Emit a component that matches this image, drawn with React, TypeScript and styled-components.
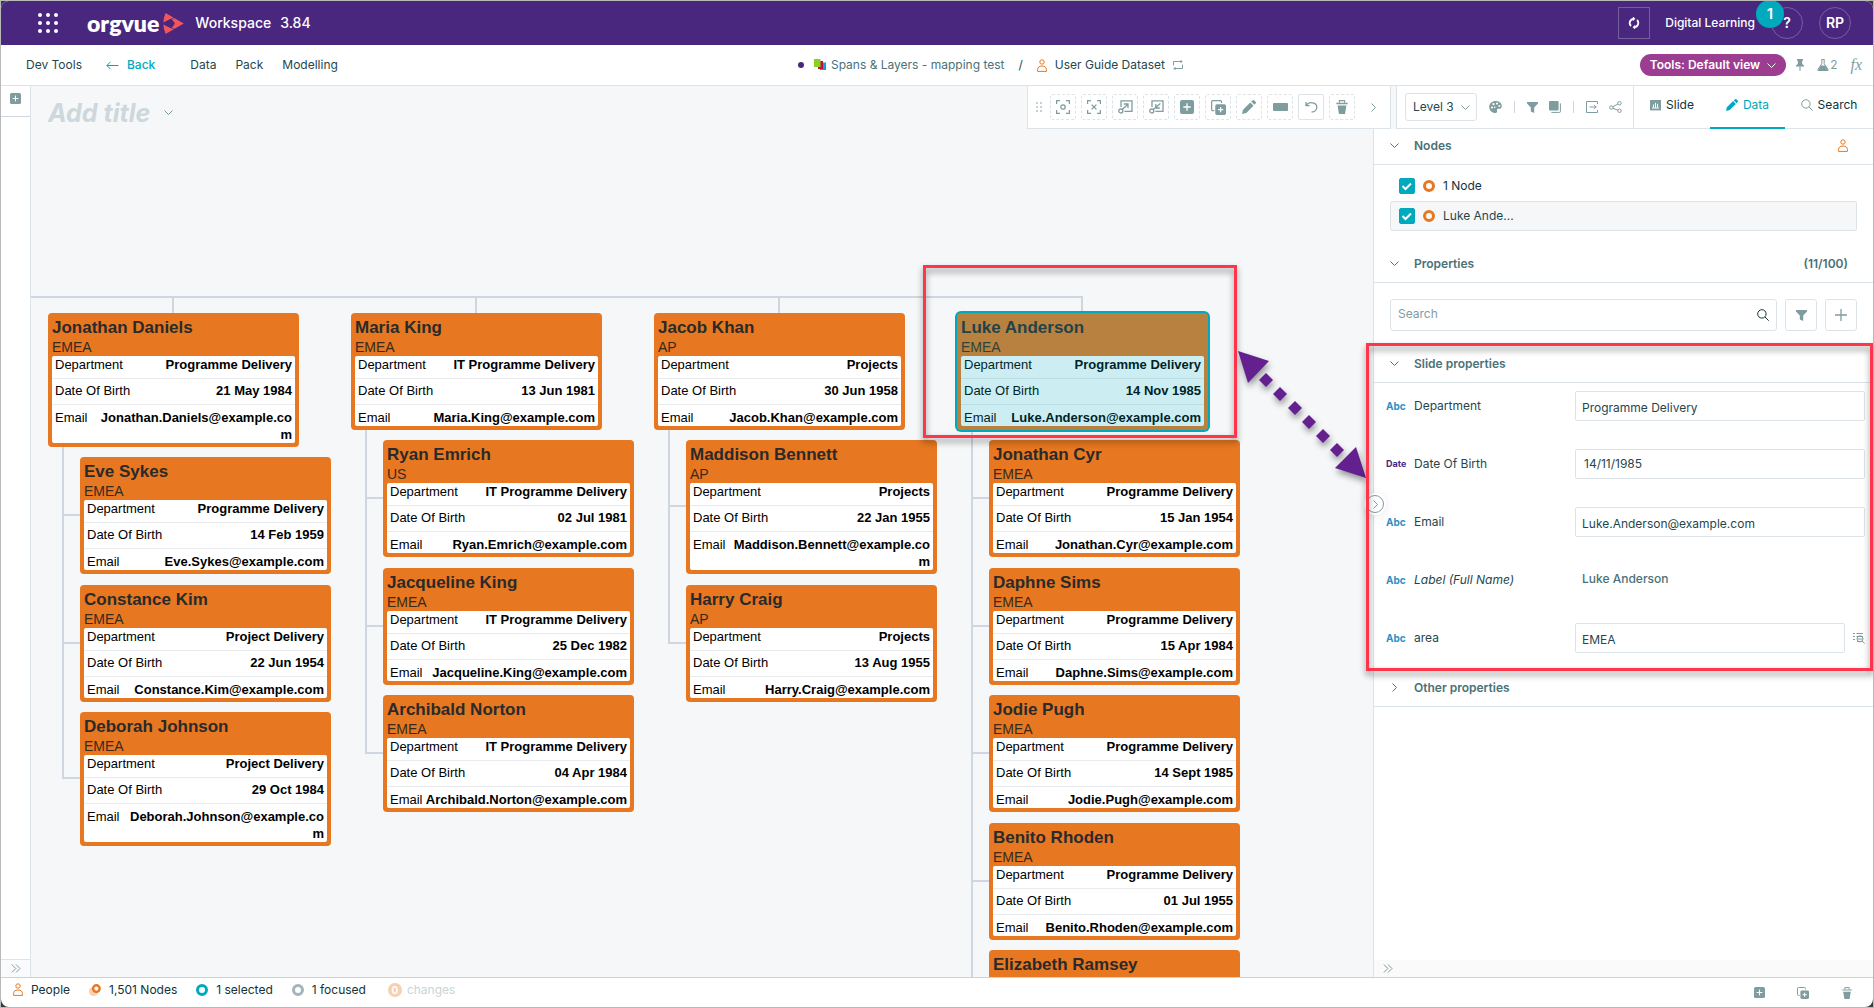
import React, { useState } from "react";
import styled, { createGlobalStyle, css } from "styled-components";

const color = {
  purple: "#49277e",
  teal: "#00a9bd",
  orange: "#e77721",
  text: "#1f474d",
  dark: "#0f3338",
  muted: "#4a7277",
  icon: "#7f9c9f",
  line: "#dde4e9",
  canvas: "#f5f7f9",
  link: "#d0d6df",
  alert: "#ff354c",
};

const GlobalStyle = createGlobalStyle`
  *, *::before, *::after { box-sizing: border-box; }
  body { margin: 0; background: #3a3a3a; }
  button, input, select { font: inherit; color: inherit; margin: 0; }
  button { padding: 0; border: 0; background: none; cursor: pointer; }
  svg { display: block; flex: none; }
`;

const Frame = styled.div`
  height: 100vh;
  border: 1px solid #b9b9b9;
  font-family: Inter, "Liberation Sans", sans-serif;
  font-size: 12px;
  line-height: 16px;
  color: ${color.text};
`;

const Window = styled.div`
  display: flex;
  flex-direction: column;
  height: 100%;
  overflow: hidden;
  border-radius: 8px;
  background: #fff;
`;

/* ---------- top bar ---------- */

const TopBar = styled.header`
  display: flex;
  align-items: center;
  flex: none;
  height: 44px;
  padding: 0 22px 0 36px;
  background: ${color.purple};
  color: #fff;
  font-weight: 500;
`;

const Brand = styled.div`
  display: flex;
  align-items: center;
  gap: 4px;
  margin: 0 11px 0 28px;
  font: 800 23px/28px Lato, "Open Sans", sans-serif;
`;

const Product = styled.span`
  display: flex;
  gap: 9px;
  flex: 1;
  font-size: 14px;
`;

const SquareButton = styled.button`
  display: grid;
  place-items: center;
  width: 32px;
  height: 32px;
  margin-right: 15px;
  border: 1px solid rgba(255, 255, 255, 0.25);
`;

const RoundButton = styled.button`
  position: relative;
  width: 32px;
  height: 32px;
  margin-left: 16px;
  border: 1px solid rgba(255, 255, 255, 0.25);
  border-radius: 50%;
  font-size: 14px;
  font-weight: 600;
`;

const Badge = styled.span`
  position: absolute;
  left: -16px;
  top: -8px;
  width: 28px;
  height: 28px;
  border-radius: 50%;
  background: ${color.teal};
  font-size: 15px;
  line-height: 28px;
  text-align: center;
`;

/* ---------- navigation ---------- */

const NavBar = styled.nav`
  display: flex;
  align-items: center;
  flex: none;
  height: 41px;
  padding-left: 25px;
  border-bottom: 1px solid ${color.line};
`;

const NavLinks = styled.div`
  display: flex;
  align-items: center;
  gap: 19px;
  flex: 1;
`;

const NavLink = styled.a<{ $back?: boolean }>`
  display: flex;
  align-items: center;
  gap: 8px;
  color: inherit;
  text-decoration: none;
  ${(p) =>
    p.$back &&
    css`
      margin: 0 16px 0 5px;
      color: ${color.teal};
      font-weight: 500;
    `}
`;

const Crumbs = styled.div`
  display: flex;
  align-items: center;
  gap: 14px;
`;

const Crumb = styled.a<{ $soft?: boolean; $gap: number }>`
  display: flex;
  align-items: center;
  gap: ${(p) => p.$gap}px;
  color: ${(p) => (p.$soft ? color.muted : color.text)};
  text-decoration: none;
`;

const Dot = styled.i`
  width: 6px;
  height: 6px;
  margin-right: 5px;
  border-radius: 50%;
  background: ${color.purple};
`;

const NavTools = styled.div`
  display: flex;
  align-items: center;
  justify-content: flex-end;
  gap: 13px;
  flex: 0 0 690px;
  padding-right: 11px;
  color: ${color.icon};
`;

const ViewPill = styled.button`
  display: flex;
  align-items: center;
  gap: 7px;
  height: 22px;
  margin-right: -3px;
  padding: 0 10px;
  border-radius: 11px;
  background: #9c3d92;
  color: #fff;
  font-weight: 600;
`;

const ToolButton = styled.button`
  display: flex;
  align-items: center;
  gap: 1px;
`;

const Fx = styled.span`
  font: italic 16px/16px "Liberation Serif", serif;
`;

/* ---------- body ---------- */

const Body = styled.div`
  display: flex;
  flex: 1;
  min-height: 0;
`;

const Rail = styled.aside`
  display: flex;
  flex-direction: column;
  justify-content: space-between;
  flex: none;
  width: 30px;
  border-right: 1px solid ${color.line};
  color: ${color.icon};
`;

const RailTop = styled.button`
  display: grid;
  place-items: center;
  height: 31px;
  padding-bottom: 5px;
  border-bottom: 1px solid ${color.link};
`;

const RailBottom = styled.button`
  display: grid;
  place-items: center;
  height: 18px;
  border-top: 1px solid ${color.line};
  background: #fafbfc;
`;

const Work = styled.main`
  display: flex;
  flex-direction: column;
  flex: 1;
  min-width: 0;
  background: ${color.canvas};
`;

const Strip = styled.div`
  display: flex;
  flex: none;
  height: 43px;
`;

const TitleBox = styled.div`
  display: flex;
  align-items: center;
  gap: 4px;
  flex: 1;
  padding: 10px 0 0 17px;
  color: ${color.icon};
`;

const TitleInput = styled.input`
  width: 112px;
  height: 32px;
  padding: 0;
  border: 0;
  outline: 0;
  background: none;
  font-size: 25px;
  font-style: italic;
  font-weight: 700;
  &::placeholder {
    color: #cdd7dc;
    opacity: 1;
  }
`;

const FloatBar = styled.div`
  display: flex;
  align-items: center;
  gap: 5px;
  width: 364px;
  margin-right: 5px;
  padding-left: 8px;
  border: solid ${color.line};
  border-width: 0 1px 1px 1px;
  background: #fff;
  color: ${color.icon};
`;

const FloatButton = styled.button<{ $solid?: boolean }>`
  display: grid;
  place-items: center;
  width: 26px;
  height: 26px;
  border: 1px ${(p) => (p.$solid ? "solid" : "dashed")} ${color.line};
  border-radius: 2px;
`;

const Grip = styled.span`
  margin-right: 2px;
  opacity: 0.6;
`;

const MoreButton = styled.button`
  display: grid;
  place-items: center;
  width: 26px;
  height: 26px;
`;

const LevelBar = styled.div`
  display: flex;
  align-items: center;
  gap: 12px;
  width: 238px;
  padding-left: 8px;
  border: solid ${color.line};
  border-width: 0 1px 1px 1px;
  background: #fff;
  color: ${color.icon};
`;

const LevelField = styled.label`
  position: relative;
  display: flex;
  align-items: center;
  width: 72px;
  height: 28px;
  svg {
    position: absolute;
    right: 7px;
    pointer-events: none;
  }
`;

const LevelSelect = styled.select`
  width: 100%;
  height: 100%;
  padding: 0 7px;
  border: 1px solid ${color.line};
  border-radius: 3px;
  appearance: none;
  background: #fff;
  color: ${color.text};
`;

const ToolGroup = styled.div<{ $ruled?: boolean }>`
  display: flex;
  gap: 11px;
  ${(p) =>
    p.$ruled &&
    css`
      padding-left: 12px;
      border-left: 1px solid ${color.link};
    `}
`;

const Tabs = styled.div`
  display: flex;
  background: #fff;
`;

const Tab = styled.button<{ $active?: boolean; $width: number }>`
  display: flex;
  align-items: center;
  justify-content: center;
  gap: 5px;
  width: ${(p) => p.$width}px;
  padding-bottom: 4px;
  border-bottom: ${(p) => (p.$active ? `2px solid ${color.teal}` : `1px solid ${color.line}`)};
  color: ${(p) => (p.$active ? color.teal : color.dark)};
  svg {
    color: ${(p) => (p.$active ? color.teal : color.icon)};
  }
`;

const Stage = styled.div`
  display: flex;
  flex: 1;
  min-height: 0;
`;

/* ---------- chart ---------- */

const Canvas = styled.section`
  position: relative;
  flex: 1;
  overflow: hidden;
`;

const Lines = styled.svg`
  position: absolute;
  inset: 0;
  width: 100%;
  height: 100%;
  fill: none;
  stroke: ${color.link};
  stroke-width: 2;
`;

const Card = styled.article<{ $x: number; $y: number; $selected?: boolean }>`
  position: absolute;
  left: ${(p) => p.$x}px;
  top: ${(p) => p.$y}px;
  width: 251px;
  min-height: 117px;
  padding: 5px 4px 4px;
  border-radius: 4px;
  background: ${color.orange};
  font-family: "Liberation Sans", Arial, sans-serif;
  font-size: 13px;
  line-height: 17px;
  color: #000;
  ${(p) =>
    p.$selected &&
    css`
      box-shadow: 0 0 0 2px ${color.teal};
      &::after {
        content: "";
        position: absolute;
        inset: 0;
        border-radius: 4px;
        background: rgba(0, 169, 189, 0.2);
      }
    `}
`;

const CardName = styled.h3`
  margin: 0;
  font-size: 17px;
  line-height: 20px;
  color: #2a2a2a;
`;

const CardArea = styled.p`
  margin: 0;
  font-size: 14px;
  line-height: 18px;
  color: #3a2a1c;
`;

const Facts = styled.dl`
  margin: 0;
  border-radius: 2px;
  background: #fff;
`;

const Fact = styled.div`
  display: flex;
  justify-content: space-between;
  padding: 3px 3px 5px;
  border-bottom: 1px solid #e9ebee;
  &:first-child {
    padding-top: 0;
  }
  &:last-child {
    padding: 4px 3px 0;
    border-bottom: 0;
  }
  dt {
    flex: none;
  }
  dd {
    max-width: 202px;
    margin: 0;
    font-weight: 700;
    text-align: right;
    word-break: break-all;
  }
`;

const Highlight = styled.div`
  position: absolute;
  border: 3px solid ${color.alert};
  filter: drop-shadow(0 4px 3px rgba(0, 0, 0, 0.45));
  pointer-events: none;
`;

const NodeHighlight = styled(Highlight)`
  left: 892px;
  top: 136px;
  width: 314px;
  height: 173px;
`;

const SectionHighlight = styled(Highlight)`
  inset: -4px 0 0 -8px;
`;

const Arrow = styled.svg`
  position: absolute;
  left: 1200px;
  top: 215px;
  filter: drop-shadow(1px 4px 3px rgba(0, 0, 0, 0.4));
`;

/* ---------- properties panel ---------- */

const Panel = styled.aside`
  position: relative;
  display: flex;
  flex-direction: column;
  flex: none;
  width: 500px;
  border-left: 1px solid ${color.line};
  background: #fff;
`;

const PanelBody = styled.div`
  flex: 1;
`;

const PanelFoot = styled.div`
  display: flex;
  align-items: center;
  height: 17px;
  padding-left: 9px;
  background: #fafafa;
  color: ${color.icon};
`;

const Collapse = styled.button`
  position: absolute;
  left: -8px;
  top: 366px;
  display: grid;
  place-items: center;
  width: 18px;
  height: 18px;
  border: 1px solid ${color.icon};
  border-radius: 50%;
  background: #fff;
  box-shadow: 0 0 0 2px #fff, 0 2px 12px rgba(0, 0, 0, 0.15);
  color: ${color.icon};
`;

const Section = styled.section`
  position: relative;
`;

const SectionHead = styled.h2`
  display: flex;
  align-items: center;
  gap: 15px;
  height: 36px;
  margin: 0;
  padding: 0 25px 2px 16px;
  border-bottom: 1px solid ${color.line};
  font-size: 12px;
  font-weight: 600;
  color: ${color.muted};
`;

const HeadText = styled.span`
  flex: 1;
`;

const NodeList = styled.div`
  padding: 6px 16px 16px;
`;

const NodeRow = styled.label<{ $current?: boolean }>`
  display: flex;
  align-items: center;
  gap: 8px;
  height: 30px;
  padding: 0 8px;
  border: 1px solid ${(p) => (p.$current ? color.line : "transparent")};
  border-radius: 2px;
  background: ${(p) => (p.$current ? color.canvas : "#fff")};
  color: ${(p) => (p.$current ? color.text : color.dark)};
`;

const Check = styled.input`
  appearance: none;
  width: 16px;
  height: 16px;
  border: 1px solid ${color.teal};
  border-radius: 2px;
  &:checked {
    background: ${color.teal};
  }
`;

const CheckWrap = styled.span`
  position: relative;
  display: flex;
  svg {
    position: absolute;
    inset: 2px;
    pointer-events: none;
  }
`;

const Ring = styled.i<{ $color: string }>`
  flex: none;
  width: 12px;
  height: 12px;
  border: 3px solid ${(p) => p.$color};
  border-radius: 50%;
`;

const SearchRow = styled.div`
  display: flex;
  gap: 8px;
  padding: 16px;
`;

const SearchBox = styled.label`
  display: flex;
  align-items: center;
  flex: 1;
  height: 32px;
  padding: 0 7px;
  border: 1px solid ${color.line};
  border-radius: 3px;
  color: ${color.dark};
`;

const SearchInput = styled.input`
  flex: 1;
  padding: 0 0 2px;
  border: 0;
  outline: 0;
  background: none;
  &::placeholder {
    color: ${color.icon};
    opacity: 1;
  }
`;

const BoxButton = styled.button`
  display: grid;
  place-items: center;
  width: 32px;
  height: 32px;
  border: 1px solid ${color.line};
  border-radius: 3px;
  color: ${color.icon};
`;

const Fields = styled.div`
  display: grid;
  gap: 28px;
  padding: 8px 8px 18px 12px;
`;

const FieldRow = styled.div<{ $lookup?: boolean }>`
  display: grid;
  grid-template-columns: 20px 153px 1fr ${(p) => (p.$lookup ? "12px" : "")};
  align-items: center;
  column-gap: 8px;
  height: 30px;
`;

const Kind = styled.span<{ $date?: boolean }>`
  font-size: ${(p) => (p.$date ? 9 : 10)}px;
  font-weight: 700;
  color: ${(p) => (p.$date ? color.purple : "#2f8fc4")};
`;

const FieldLabel = styled.label<{ $italic?: boolean }>`
  padding-bottom: 1px;
  font-style: ${(p) => (p.$italic ? "italic" : "normal")};
`;

const FieldInput = styled.input<{ $date?: boolean }>`
  width: 100%;
  min-width: 0;
  height: 30px;
  padding: ${(p) => (p.$date ? "0 8px 2px" : "3px 6px 0")};
  border: 1px solid ${color.line};
  border-radius: 2px;
  outline: 0;
`;

const FieldOutput = styled.output`
  padding: 0 7px 2px;
  font-weight: 500;
  color: ${color.muted};
`;

const FieldButton = styled.button`
  color: ${color.icon};
`;

/* ---------- status bar ---------- */

const StatusBar = styled.footer`
  display: flex;
  align-items: center;
  gap: 19px;
  flex: none;
  height: 30px;
  padding: 0 20px 6px 12px;
  border-top: 1px solid #c9d4d9;
  color: ${color.dark};
`;

const Status = styled.span<{ $faded?: boolean }>`
  display: flex;
  align-items: center;
  gap: ${(p) => (p.$faded ? 5 : 8)}px;
  margin-left: ${(p) => (p.$faded ? 3 : 0)}px;
  color: ${(p) => (p.$faded ? "#c9d4d6" : "inherit")};
`;

const Count = styled.b`
  width: 14px;
  height: 14px;
  border-radius: 50%;
  background: #f8cfb0;
  color: #fff;
  font-size: 10px;
  line-height: 14px;
  text-align: center;
`;

const StatusTools = styled.div`
  display: flex;
  gap: 32px;
  margin-left: auto;
  padding-top: 6px;
  color: ${color.icon};
`;

/* ---------- icons ---------- */

type IconProps = { size?: number };

const Chevron = ({ dir = "down", size = 9 }: { dir?: "down" | "right"; size?: number }) => (
  <svg width={size} height={size} viewBox="0 0 9 9" fill="none" stroke="currentColor">
    <path d={dir === "down" ? "M.5 2.5l4 4 4-4" : "M2.5.5l4 4-4 4"} />
  </svg>
);

const DoubleChevron = () => (
  <svg width="10" height="9" viewBox="0 0 10 9" fill="none" stroke="currentColor">
    <path d="M.8.5l4 4-4 4M5 .5l4 4-4 4" />
  </svg>
);

const Person = () => (
  <svg width="10" height="13" viewBox="0 0 10 13" fill="none" stroke={color.orange}>
    <circle cx="5" cy="3" r="2.2" />
    <path d="M.6 12.4v-1.600Q.6 7 5 7t4.400 3.800v1.600z" />
  </svg>
);

const PlusSquare = ({ size = 11 }: IconProps) => (
  <svg width={size} height={size} viewBox="0 0 11 11">
    <rect width="11" height="11" rx="1.6" fill="currentColor" />
    <path d="M5.5 2.6v5.8M2.6 5.5h5.8" stroke="#fff" />
  </svg>
);

const CopyPlus = ({ size = 12 }: IconProps) => (
  <svg width={size} height={size} viewBox="0 0 12 12">
    <path d="M2.6 8.4H1.4a.9.9 0 01-.9-.9V1.4a.9.9 0 01.9-.9h6.1a.9.9 0 01.9.9v1" fill="none" stroke="currentColor" />
    <rect x="3.4" y="3.4" width="8.6" height="8.6" rx="1.4" fill="currentColor" />
    <path d="M7.7 5.6v4.2M5.6 7.7h4.2" stroke="#fff" />
  </svg>
);

const Trash = ({ size = 12 }: IconProps) => (
  <svg width={size} height={size} viewBox="0 0 12 12">
    <path d="M3.8 2.4V.6h4.4v1.8" fill="none" stroke="currentColor" />
    <path d="M1.2 3h9.6" stroke="currentColor" strokeWidth="1.2" />
    <path d="M2.2 4.7h7.6L8.6 12H3.4z" fill="currentColor" />
  </svg>
);

const Pencil = ({ size = 13 }: IconProps) => (
  <svg width={size} height={size} viewBox="0 0 13 13" fill="currentColor">
    <path d="M0 13l.9-4L7.7 2.300l3 3L4 12zM8.500 1.500L9.700.4a1.200 1.200 0 011.700 0l1.200 1.200a1.200 1.200 0 010 1.700l-1.100 1.200z" />
  </svg>
);

const Funnel = ({ size = 11 }: IconProps) => (
  <svg width={size} height={size} viewBox="0 0 11 11" fill="currentColor">
    <path d="M0 0h11v1.4L7.2 5.600V11L3.800 9.400V5.600L0 1.400z" />
  </svg>
);

const Magnifier = () => (
  <svg width="12" height="12" viewBox="0 0 12 12" fill="none" stroke="currentColor">
    <circle cx="4.9" cy="4.9" r="4.2" />
    <path d="M8 8l3.7 3.7" />
  </svg>
);

const FocusFrame = ({ cross }: { cross?: boolean }) => (
  <svg width="14" height="14" viewBox="0 0 14 14" fill="none" stroke="currentColor" strokeWidth="1.3">
    <path d="M.6 4V.6H4M10 .6h3.4V4M13.4 10v3.4H10M4 13.400H.6V10" />
    {cross ? <path d="M4.6 4.6l4.8 4.8M9.4 4.6L4.6 9.4" /> : <circle cx="7" cy="7" r="2.2" />}
  </svg>
);

const Branch = ({ inward }: { inward?: boolean }) => (
  <svg width="15" height="14" viewBox="0 0 15 14" fill="none" stroke="currentColor" strokeWidth="1.3">
    <path d="M3 7V.8h11v10.6H6.4" />
    <circle cx="2.8" cy="11" r="2" />
    <path d={inward ? "M4.2 9.600L11.400 3.400M6.800 4v4h4" : "M4.200 9.600L9.800 4.400M5.800 4h4.200v4"} />
  </svg>
);

const Undo = () => (
  <svg width="13" height="12" viewBox="0 0 13 12" fill="none" stroke="currentColor" strokeWidth="1.3">
    <path d="M1 1v3.600h3.600M1.200 4.400C4 .2 11.800 1 11.800 6.200c0 3-2.400 4.800-5.200 4.800" />
  </svg>
);

const Palette = () => (
  <svg width="13" height="12" viewBox="0 0 13 12">
    <path d="M6.5 0C10 0 12.8 2 12.8 5c0 2.4-1.6 3-3.2 2.8-1.4-.2-2 .6-1.6 1.8.3 1.2 0 2.4-1.6 2.4C3 12 .2 9.4 .2 6S3 0 6.5 0z" fill="currentColor" />
    <g fill="#fff">
      <circle cx="3" cy="6.5" r="1.100" />
      <circle cx="4.5" cy="3.2" r="1.100" />
      <circle cx="8" cy="2.6" r="1.100" />
      <circle cx="10.4" cy="4.9" r="1" />
      <circle cx="5.8" cy="6.2" r=".8" />
    </g>
  </svg>
);

const Stack = () => (
  <svg width="12" height="12" viewBox="0 0 12 12">
    <rect width="9.6" height="9.6" rx="1" fill="currentColor" />
    <path d="M11.4 2.4v8.200a.8.800 0 01-.8.800H2.400" fill="none" stroke="currentColor" />
  </svg>
);

const Export = () => (
  <svg width="12" height="12" viewBox="0 0 12 12" fill="none" stroke="currentColor">
    <path d="M11.5 3.2V.5H.5v11h11V8.8M3.6 6h6.6M8 3.8L10.2 6 8 8.2" />
  </svg>
);

const Share = () => (
  <svg width="13" height="12" viewBox="0 0 13 12" fill="none" stroke="currentColor">
    <circle cx="2.3" cy="6.5" r="1.7" />
    <circle cx="10.5" cy="2.2" r="1.7" />
    <circle cx="10.5" cy="9.8" r="1.7" />
    <path d="M3.8 5.7L9 3M3.8 7.3L9 9.2" />
  </svg>
);

const Slides = () => (
  <svg width="11" height="11" viewBox="0 0 11 11">
    <rect width="11" height="10.4" fill="currentColor" />
    <path d="M3.5 4.5v3M5.5 2.8v4.7M7.5 3.8v3.7M2 8h7" stroke="#fff" />
  </svg>
);

const Pin = () => (
  <svg width="8" height="12" viewBox="0 0 8 12" fill="currentColor">
    <path d="M1 0h6v1.4H6.2V5L8 6.4v1H4.5V12h-1V7.4H0v-1L1.8 5V1.4H1z" />
  </svg>
);

const Flask = () => (
  <svg width="12" height="12" viewBox="0 0 12 12">
    <path d="M4.6.5h2.8M4.8.5v4.2L.9 10.6v.9h10.200v-.9L7.200 4.700V.5" fill="none" stroke="currentColor" />
    <path d="M3.600 6.600h4.800l2.700 4.900H.9z" fill="currentColor" />
  </svg>
);

const Lookup = () => (
  <svg width="12" height="12" viewBox="0 0 12 12" fill="none" stroke="currentColor">
    <path d="M0 1.500h2M3.500 1.500H10M0 4.500h2M3.500 4.500H10M0 7.500h2M4 9.500h5M4.500 7h5" />
    <circle cx="7" cy="6.8" r="3" />
    <path d="M9.200 9l2.500 2.600" />
  </svg>
);

const Layers = () => (
  <svg width="12" height="12" viewBox="0 0 12 12">
    <rect x="6" y="3.5" width="6" height="7.5" fill="#1b9be0" />
    <rect x="4" y="2" width="5" height="8" fill="#c1133f" />
    <rect width="6.5" height="8" fill="#8ad021" />
  </svg>
);

const Loop = () => (
  <svg width="10" height="10" viewBox="0 0 10 10" fill="none" stroke={color.icon}>
    <path d="M.5 5.500v-4h8.500M7.500 0L9 1.500 7.500 3M9.500 4.500v4H1M2.500 7L1 8.500 2.500 10" />
  </svg>
);

const Refresh = () => (
  <svg width="12" height="12" viewBox="0 0 12 12" fill="none" stroke="#fff" strokeWidth="1.8">
    <path d="M5.500 1.800A4.200 4.200 0 003 9M6.500 10.200A4.200 4.200 0 009 3" />
    <path d="M4.800-.6l2.600 2.400-2.600 2.400zM7.200 12.600l-2.600-2.400 2.600-2.400z" fill="#fff" stroke="none" />
  </svg>
);

const BackArrow = () => (
  <svg width="13" height="9" viewBox="0 0 13 9" fill="none" stroke="currentColor">
    <path d="M12.500 4.500H1M4.500.8L.9 4.500l3.600 3.700" />
  </svg>
);

const AppGrid = () => (
  <svg width="22" height="22" viewBox="0 0 22 22" fill="#fff">
    {[3, 11, 19].map((y) => [3, 11, 19].map((x) => <circle key={`${x}-${y}`} cx={x} cy={y} r="2" />))}
  </svg>
);

const Mark = () => (
  <svg width="21" height="21" viewBox="0 0 21 21" fill="#f2555a">
    <path d="M2.600 0L10.800 4.800 6.800 6.200.4 9.600Q.6 4.500 2.600 0z" />
    <path d="M2.600 21l8.200-4.800-4-1.400-6.400-3.400Q.6 16.500 2.600 21z" />
    <path d="M11.600 5.300l9.200 5.200-9.200 5.200q-1.800-.2-2.800-1l3.200-4.200-3.200-4.200q1-.8 2.800-1z" />
  </svg>
);

const GripDots = () => (
  <svg width="7" height="10" viewBox="0 0 7 10" fill="currentColor">
    {[1, 5, 9].map((y) => [1, 5].map((x) => <circle key={`${x}-${y}`} cx={x} cy={y} r="1" />))}
  </svg>
);

const Tick = () => (
  <svg width="12" height="12" viewBox="0 0 12 12" fill="none" stroke="#fff" strokeWidth="2">
    <path d="M1.500 6l3 3 5.500-5.500" />
  </svg>
);

const Bar = () => (
  <svg width="15" height="8" viewBox="0 0 15 8">
    <rect width="15" height="8" rx="1" fill="currentColor" />
  </svg>
);

const Plus = () => (
  <svg width="12" height="12" viewBox="0 0 12 12" stroke="currentColor" strokeWidth="1.3">
    <path d="M6 0v12M0 6h12" />
  </svg>
);

const NodesGlyph = () => (
  <svg width="12" height="12" viewBox="0 0 12 12" fill="none">
    <circle cx="4.5" cy="7.5" r="4.5" fill="#f8cfb0" />
    <circle cx="7.400" cy="4.600" r="3.300" stroke={color.orange} strokeWidth="2.400" fill="#fff" />
  </svg>
);

/* ---------- data ---------- */

type Node = { name: string; y: number; area?: string; dept?: string; born?: string };
type Column = { x: number; selected?: boolean; head: Node; reports: Node[]; trunkEnd?: number };

const node = (y: number, name: string, area?: string, dept?: string, born?: string): Node => ({
  y, name, area, dept, born,
});

const emailOf = (name: string) => `${name.replace(" ", ".")}@example.com`;

const columns: Column[] = [
  {
    x: 17,
    head: node(184, "Jonathan Daniels", "EMEA", "Programme Delivery", "21 May 1984"),
    reports: [
      node(328, "Eve Sykes", "EMEA", "Programme Delivery", "14 Feb 1959"),
      node(456, "Constance Kim", "EMEA", "Project Delivery", "22 Jun 1954"),
      node(583, "Deborah Johnson", "EMEA", "Project Delivery", "29 Oct 1984"),
    ],
    trunkEnd: 650,
  },
  {
    x: 320,
    head: node(184, "Maria King", "EMEA", "IT Programme Delivery", "13 Jun 1981"),
    reports: [
      node(311, "Ryan Emrich", "US", "IT Programme Delivery", "02 Jul 1981"),
      node(439, "Jacqueline King", "EMEA", "IT Programme Delivery", "25 Dec 1982"),
      node(566, "Archibald Norton", "EMEA", "IT Programme Delivery", "04 Apr 1984"),
    ],
  },
  {
    x: 623,
    head: node(184, "Jacob Khan", "AP", "Projects", "30 Jun 1958"),
    reports: [
      node(311, "Maddison Bennett", "AP", "Projects", "22 Jan 1955"),
      node(456, "Harry Craig", "AP", "Projects", "13 Aug 1955"),
    ],
  },
  {
    x: 926,
    selected: true,
    trunkEnd: 900,
    head: node(184, "Luke Anderson", "EMEA", "Programme Delivery", "14 Nov 1985"),
    reports: [
      node(311, "Jonathan Cyr", "EMEA", "Programme Delivery", "15 Jan 1954"),
      node(439, "Daphne Sims", "EMEA", "Programme Delivery", "15 Apr 1984"),
      node(566, "Jodie Pugh", "EMEA", "Programme Delivery", "14 Sept 1985"),
      node(694, "Benito Rhoden", "EMEA", "Programme Delivery", "01 Jul 1955"),
      node(821, "Elizabeth Ramsey"),
    ],
  },
];

/* Addresses this long break onto a second line and make their card one line taller. */
const WRAPS = ["Deborah Johnson", "Maddison Bennett"];

const INDENT = 32;
const midOf = (n: Node) => n.y + (WRAPS.includes(n.name) ? 66 : 58);

const PersonCard = ({ x, data, selected }: { x: number; data: Node; selected?: boolean }) => (
  <Card $x={x} $y={data.y} $selected={selected}>
    <CardName>{data.name}</CardName>
    {data.area && <CardArea>{data.area}</CardArea>}
    {data.dept && (
      <Facts>
        <Fact><dt>Department</dt><dd>{data.dept}</dd></Fact>
        <Fact><dt>Date Of Birth</dt><dd>{data.born}</dd></Fact>
        <Fact><dt>Email</dt><dd>{emailOf(data.name)}</dd></Fact>
      </Facts>
    )}
  </Card>
);

const Connectors = () => (
  <Lines aria-hidden="true">
    <path d="M0 168H1052" />
    {columns.map((c) => (
      <g key={c.x}>
        <path d={`M${c.x + 125} 168V184`} />
        <path d={`M${c.x + 15} 290V${c.trunkEnd ?? midOf(c.reports[c.reports.length - 1]) + 1}`} />
        {c.reports.map((r) => (
          <path key={r.name} d={`M${c.x + 15} ${midOf(r)}h17`} />
        ))}
      </g>
    ))}
  </Lines>
);

const diamonds = [[35, 36], [49, 50], [64, 64], [78, 78], [92, 92], [106, 106]];

const DoubleArrow = () => (
  <Arrow width="140" height="140" viewBox="0 0 140 140" fill="#652090" aria-hidden="true">
    <path d="M7 7l31 10-21 22zM135 134l-31-10 21-21z" />
    {diamonds.map(([x, y]) => (
      <path key={x} d={`M${x} ${y - 7}l7 7-7 7-7-7z`} />
    ))}
  </Arrow>
);

type Field = { id: string; label: string; value: string; date?: boolean; readOnly?: boolean; lookup?: boolean };

const fields: Field[] = [
  { id: "department", label: "Department", value: "Programme Delivery" },
  { id: "born", label: "Date Of Birth", value: "14/11/1985", date: true },
  { id: "email", label: "Email", value: "Luke.Anderson@example.com" },
  { id: "fullname", label: "Label (Full Name)", value: "Luke Anderson", readOnly: true },
  { id: "area", label: "area", value: "EMEA", lookup: true },
];

const PropertyField = ({ field }: { field: Field }) => (
  <FieldRow $lookup={field.lookup}>
    <Kind $date={field.date}>{field.date ? "Date" : "Abc"}</Kind>
    <FieldLabel htmlFor={field.id} $italic={field.readOnly}>{field.label}</FieldLabel>
    {field.readOnly ? (
      <FieldOutput id={field.id}>{field.value}</FieldOutput>
    ) : (
      <FieldInput id={field.id} type="text" defaultValue={field.value} $date={field.date} />
    )}
    {field.lookup && <FieldButton aria-label="Choose a value"><Lookup /></FieldButton>}
  </FieldRow>
);

const NodeItem = ({ label, current }: { label: string; current?: boolean }) => {
  const [on, setOn] = useState(true);
  return (
    <NodeRow $current={current}>
      <CheckWrap>
        <Check type="checkbox" checked={on} onChange={() => setOn(!on)} />
        {on && <Tick />}
      </CheckWrap>
      <Ring $color={color.orange} />
      {label}
    </NodeRow>
  );
};

const floatTools = [
  { label: "Focus", icon: <FocusFrame /> },
  { label: "Clear focus", icon: <FocusFrame cross /> },
  { label: "Expand", icon: <Branch /> },
  { label: "Collapse", icon: <Branch inward /> },
  { label: "Add", icon: <PlusSquare size={14} /> },
  { label: "Duplicate", icon: <CopyPlus size={15} /> },
  { label: "Edit", icon: <Pencil size={14} /> },
  { label: "Label", icon: <Bar /> },
  { label: "Undo", icon: <Undo />, solid: true },
  { label: "Delete", icon: <Trash size={14} /> },
];

export default function App() {
  return (
    <>
      <GlobalStyle />
      <Frame>
        <Window>
          <TopBar>
            <button aria-label="Applications"><AppGrid /></button>
            <Brand>orgvue<Mark /></Brand>
            <Product><span>Workspace</span><span>3.84</span></Product>
            <SquareButton aria-label="Refresh"><Refresh /></SquareButton>
            <span>Digital Learning</span>
            <RoundButton>?<Badge>1</Badge></RoundButton>
            <RoundButton>RP</RoundButton>
          </TopBar>

          <NavBar>
            <NavLinks>
              <NavLink href="#dev">Dev Tools</NavLink>
              <NavLink href="#back" $back><BackArrow />Back</NavLink>
              <NavLink href="#data">Data</NavLink>
              <NavLink href="#pack">Pack</NavLink>
              <NavLink href="#modelling">Modelling</NavLink>
            </NavLinks>
            <Crumbs>
              <Crumb href="#pack-name" $soft $gap={5}><Dot /><Layers />Spans &amp; Layers - mapping test</Crumb>
              <span>/</span>
              <Crumb href="#dataset" $gap={8}><Person />User Guide Dataset<Loop /></Crumb>
            </Crumbs>
            <NavTools>
              <ViewPill>Tools: Default view<Chevron /></ViewPill>
              <ToolButton aria-label="Pin"><Pin /></ToolButton>
              <ToolButton><Flask />2</ToolButton>
              <ToolButton><Fx>fx</Fx></ToolButton>
            </NavTools>
          </NavBar>

          <Body>
            <Rail>
              <RailTop aria-label="Add slide"><PlusSquare /></RailTop>
              <RailBottom aria-label="Expand slides"><DoubleChevron /></RailBottom>
            </Rail>

            <Work>
              <Strip>
                <TitleBox>
                  <TitleInput aria-label="Title" placeholder="Add title" />
                  <button aria-label="Title options"><Chevron /></button>
                </TitleBox>
                <FloatBar>
                  <Grip><GripDots /></Grip>
                  {floatTools.map((t) => (
                    <FloatButton key={t.label} aria-label={t.label} $solid={t.solid}>{t.icon}</FloatButton>
                  ))}
                  <MoreButton aria-label="More tools"><Chevron dir="right" /></MoreButton>
                </FloatBar>
                <LevelBar>
                  <LevelField>
                    <LevelSelect aria-label="Level" defaultValue="3">
                      <option value="1">Level 1</option>
                      <option value="2">Level 2</option>
                      <option value="3">Level 3</option>
                    </LevelSelect>
                    <Chevron />
                  </LevelField>
                  <ToolGroup>
                    <ToolButton aria-label="Colours"><Palette /></ToolButton>
                  </ToolGroup>
                  <ToolGroup $ruled>
                    <ToolButton aria-label="Filter"><Funnel /></ToolButton>
                    <ToolButton aria-label="Layers"><Stack /></ToolButton>
                  </ToolGroup>
                  <ToolGroup $ruled>
                    <ToolButton aria-label="Export"><Export /></ToolButton>
                    <ToolButton aria-label="Share"><Share /></ToolButton>
                  </ToolGroup>
                </LevelBar>
                <Tabs>
                  <Tab $width={76}><Slides />Slide</Tab>
                  <Tab $width={75} $active><Pencil size={12} />Data</Tab>
                  <Tab $width={88}><Magnifier />Search</Tab>
                </Tabs>
              </Strip>

              <Stage>
                <Canvas>
                  <Connectors />
                  {columns.map((c) => (
                    <React.Fragment key={c.x}>
                      <PersonCard x={c.x} data={c.head} selected={c.selected} />
                      {c.reports.map((r) => <PersonCard key={r.name} x={c.x + INDENT} data={r} />)}
                    </React.Fragment>
                  ))}
                  <NodeHighlight />
                  <DoubleArrow />
                </Canvas>

                <Panel>
                  <Collapse aria-label="Hide panel"><Chevron dir="right" /></Collapse>
                  <PanelBody>
                    <Section>
                      <SectionHead><Chevron /><HeadText>Nodes</HeadText><Person /></SectionHead>
                      <NodeList>
                        <NodeItem label="1 Node" />
                        <NodeItem label="Luke Ande..." current />
                      </NodeList>
                    </Section>
                    <Section>
                      <SectionHead><Chevron /><HeadText>Properties</HeadText><span>(11/100)</span></SectionHead>
                      <SearchRow>
                        <SearchBox>
                          <SearchInput type="text" placeholder="Search" aria-label="Search properties" />
                          <Magnifier />
                        </SearchBox>
                        <BoxButton aria-label="Filter properties"><Funnel /></BoxButton>
                        <BoxButton aria-label="Add property"><Plus /></BoxButton>
                      </SearchRow>
                    </Section>
                    <Section>
                      <SectionHead><Chevron /><HeadText>Slide properties</HeadText></SectionHead>
                      <Fields>
                        {fields.map((f) => <PropertyField key={f.id} field={f} />)}
                      </Fields>
                      <SectionHighlight />
                    </Section>
                    <Section>
                      <SectionHead><Chevron dir="right" /><HeadText>Other properties</HeadText></SectionHead>
                    </Section>
                  </PanelBody>
                  <PanelFoot><DoubleChevron /></PanelFoot>
                </Panel>
              </Stage>
            </Work>
          </Body>

          <StatusBar>
            <Status><Person />People</Status>
            <Status><NodesGlyph />1,501 Nodes</Status>
            <Status><Ring $color={color.teal} />1 selected</Status>
            <Status><Ring $color="#a3b4bd" />1 focused</Status>
            <Status $faded><Count>0</Count>changes</Status>
            <StatusTools>
              <ToolButton aria-label="Add node"><PlusSquare /></ToolButton>
              <ToolButton aria-label="Duplicate node"><CopyPlus /></ToolButton>
              <ToolButton aria-label="Delete node"><Trash /></ToolButton>
            </StatusTools>
          </StatusBar>
        </Window>
      </Frame>
    </>
  );
}
